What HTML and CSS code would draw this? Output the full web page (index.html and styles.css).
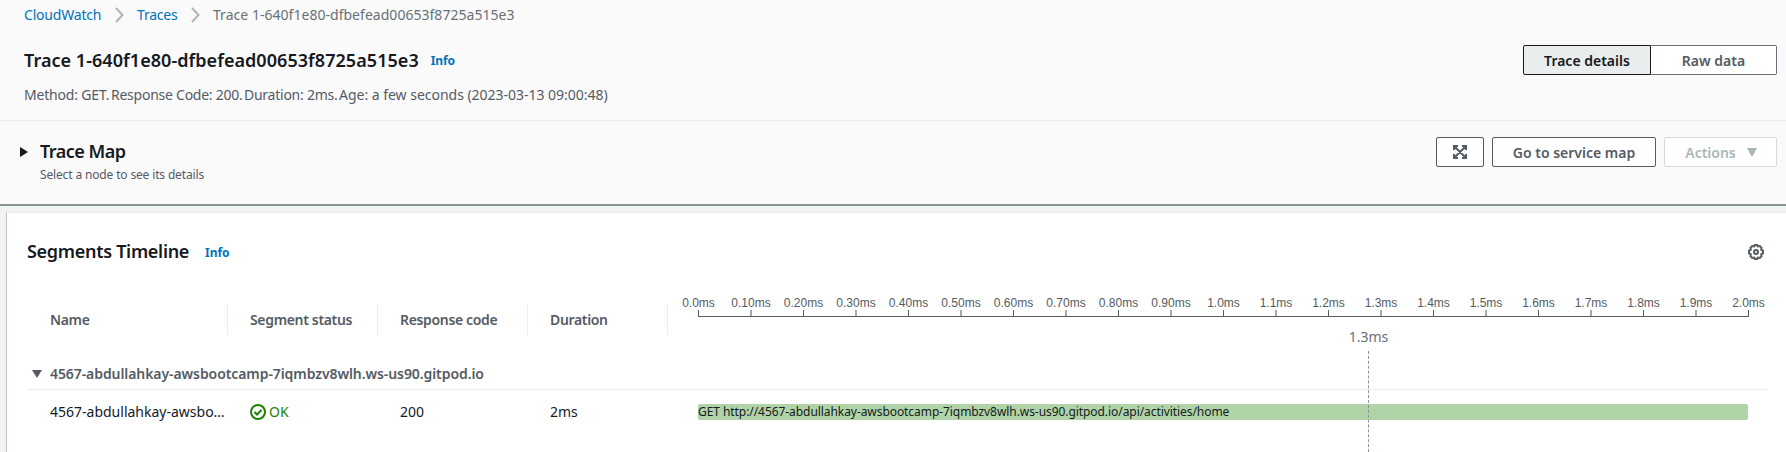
FILE: index.html
```html
<!DOCTYPE html>
<html lang="en">
<head>
<meta charset="utf-8">
<title>CloudWatch Trace</title>
<link rel="stylesheet" href="styles.css">
</head>
<body>
<header class="top">
  <nav class="crumbs">
    <a class="c1">CloudWatch</a>
    <svg class="chev" viewBox="0 0 9 16"><path d="M1 1l6.500 7L1 15"/></svg>
    <a class="c2">Traces</a>
    <svg class="chev" viewBox="0 0 9 16"><path d="M1 1l6.500 7L1 15"/></svg>
    <span class="c3">Trace 1-640f1e80-dfbefead00653f8725a515e3</span>
  </nav>
  <div class="title-row">
    <h1>Trace 1-640f1e80-dfbefead00653f8725a515e3</h1>
    <a class="info">Info</a>
    <div class="toggle"><button class="on">Trace details</button><button>Raw data</button></div>
  </div>
  <p class="summary"><span class="s1">Method: GET.</span><span class="s2">Response Code: 200.</span><span class="s3">Duration: 2ms.</span><span class="s4">Age: a few seconds (2023-03-13 09:00:48)</span></p>
</header>
<section class="map">
  <svg class="caret-right" viewBox="0 0 8 12"><path d="M0 1v10l8-5z"/></svg>
  <div class="map-head">
    <h2>Trace Map</h2>
    <p>Select a node to see its details</p>
  </div>
  <div class="actions">
    <button class="btn expand"><svg viewBox="0 0 14 14"><path d="M1 5V1h4M9 1h4v4M13 9v4H9M5 13H1V9M1.500 1.500l11 11M12.500 1.500l-11 11"/></svg></button>
    <button class="btn service"><span>Go to service map</span></button>
    <button class="btn menu" disabled><span>Actions</span><svg viewBox="0 0 10 9"><path d="M0 0h10L5 9z"/></svg></button>
  </div>
</section>
<main class="panel">
  <div class="panel-head">
    <h2>Segments Timeline</h2>
    <a class="info">Info</a>
    <svg class="gear" viewBox="0 0 16 16"><path d="M6.800 1h2.400l.6 1.400 2-.4 1.700 1.800-.3 1.900 1.800.9v2.800l-1.800.9.3 1.900-1.700 1.800-2-.4L9.200 15H6.800l-.6-1.400-2 .4-1.700-1.800.3-1.900L1 9.400V6.600l1.800-.9-.3-1.900L4.200 2l2 .4z"/><circle cx="8" cy="8" r="2"/></svg>
  </div>
  <div class="columns">
    <div class="col name"><span>Name</span></div>
    <div class="col status"><span>Segment status</span></div>
    <div class="col code"><span>Response code</span></div>
    <div class="col duration"><span>Duration</span></div>
    <svg class="axis" id="axis" width="1090" height="36" viewBox="0 0 1090 36"></svg>
  </div>
  <div class="group">
    <svg viewBox="0 0 10 8"><path d="M0 0h10L5 8z"/></svg>
    <span>4567-abdullahkay-awsbootcamp-7iqmbzv8wlh.ws-us90.gitpod.io</span>
  </div>
  <div class="row">
    <div class="cell name"><span>4567-abdullahkay-awsbo…</span></div>
    <div class="cell status"><svg viewBox="0 0 16 16"><circle cx="8" cy="8" r="7"/><path d="M4.500 8l2.500 2.500 4.500-4.500"/></svg><span>OK</span></div>
    <div class="cell code"><span>200</span></div>
    <div class="cell duration"><span>2ms</span></div>
    <div class="bar"><span>GET http://4567-abdullahkay-awsbootcamp-7iqmbzv8wlh.ws-us90.gitpod.io/api/activities/home</span></div>
  </div>
  <div class="cursor"><span>1.3ms</span></div>
</main>
<script src="axis.js"></script>
</body>
</html>
```
FILE: axis.js
```js
const axis = document.getElementById('axis');
const NS = 'http://www.w3.org/2000/svg';
const labels = ['0.0', '0.10', '0.20', '0.30', '0.40', '0.50', '0.60', '0.70', '0.80', '0.90',
  '1.0', '1.1', '1.2', '1.3', '1.4', '1.5', '1.6', '1.7', '1.8', '1.9', '2.0'];
function add(tag, attrs, text) {
  const el = document.createElementNS(NS, tag);
  for (const key in attrs) el.setAttribute(key, attrs[key]);
  if (text) el.textContent = text;
  axis.appendChild(el);
}
add('path', { d: 'M20 25.5h1051' });
labels.forEach((label, i) => {
  const x = 20.5 + i * 52.5;
  const odd = i % 2 === 1;
  add('path', { d: `M${x} 19v6`, class: odd ? 'tick soft' : 'tick' });
  add('text', { x, y: 16 }, label + 'ms');
});
```
FILE: styles.css
```css
* { box-sizing: border-box; }
body { margin: 0; width: 1786px; height: 452px; overflow: hidden; background: #f2f3f3; font-family: "Noto Sans", sans-serif; font-size: 14px; color: #16191f; }
h1, h2, p { margin: 0; }
button { font: inherit; margin: 0; padding: 0; }
a { color: #0073bb; }
span, a, h1, h2, p { white-space: nowrap; }
svg { flex: none; display: block; }
.top { height: 121px; background: #fafafa; border-bottom: 1px solid #eaeded; padding: 0 9px 0 24px; }
.crumbs { display: flex; align-items: center; height: 30px; color: #687078; }
.c1, .c2 { letter-spacing: -0.2px; line-height: 19px; padding-bottom: 1px; }
.c1 { width: 77px; }
.c2 { width: 40px; }
.c3 { letter-spacing: 0.03px; padding-bottom: 1px; }
.chev { width: 9px; height: 16px; margin: 0 13px 0 14px; fill: none; stroke: #aab7b8; stroke-width: 2; }
.title-row { display: flex; align-items: center; height: 60px; }
h1, h2 { font-size: 18px; font-weight: 600; line-height: 22px; }
h1 { letter-spacing: 0.05px; padding-bottom: 1px; }
h2 { letter-spacing: -0.3px; }
.info { font-size: 12px; font-weight: 700; margin-left: 12px; letter-spacing: -0.1px; }
.toggle { display: flex; margin-left: auto; }
.toggle button { width: 126px; height: 30px; background: #fff; border: 1px solid #687078; border-left: 0; border-radius: 0 2px 2px 0; font-weight: 600; color: #545b64; }
.toggle .on { width: 128px; border: 1px solid #16191f; background: #eaeded; color: #16191f; border-radius: 2px 0 0 2px; }
.summary { display: flex; color: #545b64; line-height: 20px; margin-top: -5px; }
.s1 { width: 87px; letter-spacing: -0.18px; }
.s2 { width: 133px; letter-spacing: -0.25px; }
.s3 { width: 95px; letter-spacing: -0.25px; }
.s4 { letter-spacing: -0.02px; }
.map { display: flex; height: 85px; background: #fafafa; border-bottom: 2px solid #879596; padding: 16px 9px 0 20px; }
.caret-right { width: 8px; height: 12px; margin: 9px 12px 0 0; fill: #16191f; }
.map-head { padding-top: 3px; }
.map-head h2 { letter-spacing: -0.5px; }
.map-head p { font-size: 12px; line-height: 16px; margin-top: 5px; color: #545b64; letter-spacing: -0.15px; }
.actions { display: flex; gap: 8px; margin-left: auto; }
.btn { height: 30px; display: flex; align-items: center; justify-content: center; background: #fff; border: 1px solid #545b64; border-radius: 2px; font-weight: 600; color: #545b64; }
.expand { width: 48px; }
.expand svg { width: 14px; height: 14px; fill: none; stroke: #545b64; stroke-width: 2; }
.service { width: 164px; }
.menu { width: 113px; gap: 11px; padding-left: 1px; color: #aab7b8; border-color: #d5dbdb; }
.menu svg { width: 10px; height: 9px; fill: #aab7b8; }
.panel { position: relative; height: 240px; margin: 6px 0 0 6px; background: #fff; border-left: 1px solid #bfc6c7; border-top: 1px solid #eaeded; }
.panel-head { display: flex; align-items: center; height: 78px; padding: 0 22px 0 20px; }
.panel-head h2 { height: 24px; }
.panel-head .info { margin-left: 16px; }
.gear { width: 16px; height: 16px; margin-left: auto; fill: none; stroke: #545b64; stroke-width: 2; }
.columns { display: flex; height: 62px; padding: 12px 0 0 20px; }
.col { display: flex; align-items: center; height: 31px; margin-top: 1px; border-right: 1px solid #eaeded; padding: 0 0 1px 22px; font-weight: 600; color: #545b64; letter-spacing: -0.34px; }
.name { width: 201px; }
.col.name, .cell.name { padding-left: 23px; }
.status, .code { width: 150px; }
.duration { width: 140px; }
.axis { margin-left: 10px; margin-top: -12px; fill: none; stroke: #545b64; }
.axis text { fill: #545b64; stroke: none; font: 12px "Liberation Sans", Arial, sans-serif; text-anchor: middle; }
.axis .soft { stroke: #a5aab0; stroke-width: 2; }
.group { display: flex; align-items: center; height: 37px; margin: 0 18px 0 20px; padding: 5px 0 0 5px; border-bottom: 1px solid #eaeded; font-weight: 600; color: #545b64; letter-spacing: -0.08px; }
.group svg { width: 10px; height: 8px; margin-right: 8px; fill: #545b64; }
.row { display: flex; align-items: center; height: 44px; padding-left: 20px; }
.cell { display: flex; align-items: center; padding-left: 22px; }
.cell span { padding-bottom: 2px; }
.status svg { width: 16px; height: 16px; margin-right: 3px; fill: none; stroke: #1d8102; stroke-width: 2; }
.cell.status { color: #1d8102; }
.bar { width: 1050px; height: 16px; margin-left: 30px; border-radius: 2px; background: #b0d4a8; font-size: 12px; line-height: 15px; letter-spacing: -0.065px; }
.cursor { position: absolute; left: 1361px; top: 114px; bottom: 0; width: 1px; display: flex; flex-direction: column; align-items: center; color: #687078; }
.cursor span { height: 24px; }
.cursor::after { content: ""; flex: 1; border-left: 1px dashed #879596; }
```
